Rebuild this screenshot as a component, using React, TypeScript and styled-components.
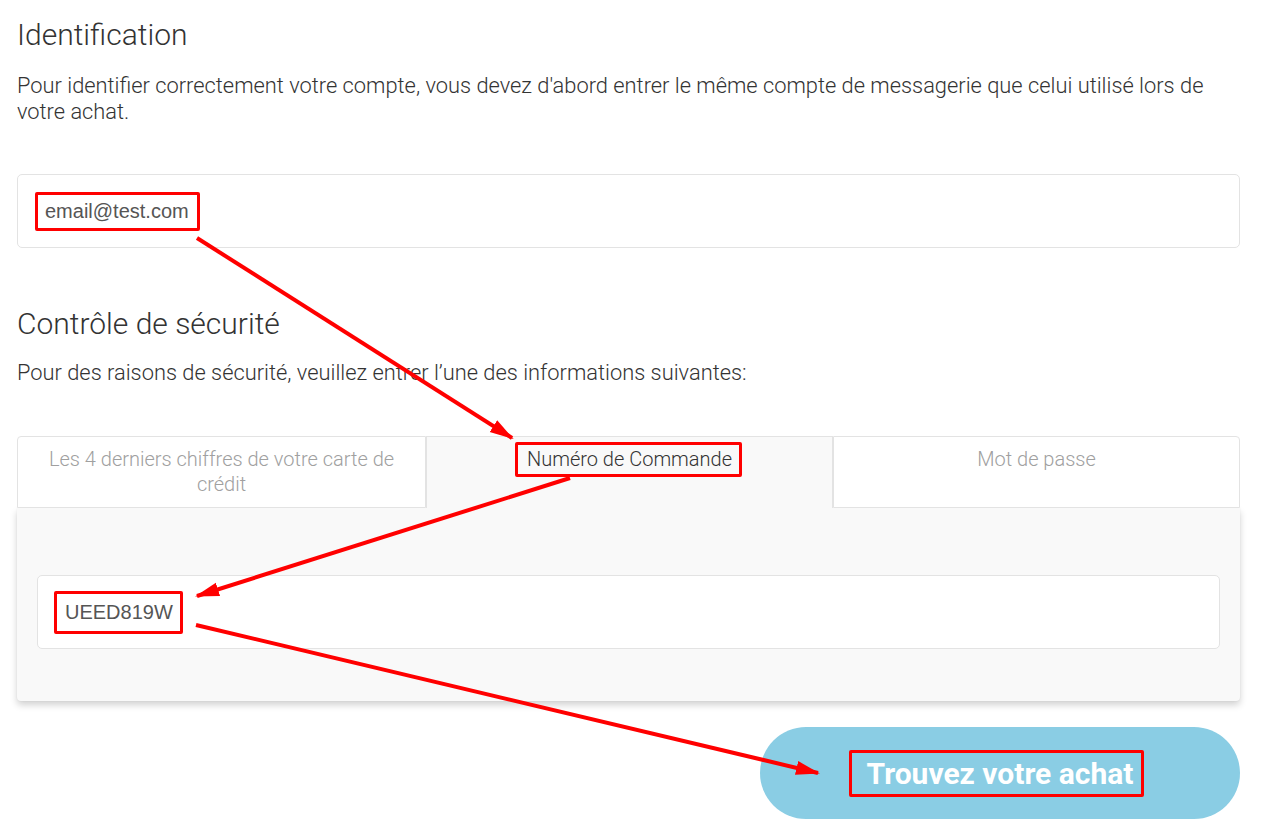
import React from "react";
import styled, { createGlobalStyle } from "styled-components";

const red = "#ff0000";
const line = "#e3e3e3";
const dark = "#333333";
const muted = "#a0a0a0";

const GlobalStyle = createGlobalStyle`
  body {
    margin: 0;
    background: #ffffff;
    font-family: Roboto, "Liberation Sans", sans-serif;
  }
`;

const Page = styled.div`
  position: relative;
  width: 1223px;
  padding: 17px 34px 16px 17px;
`;

const Title = styled.h2<{ $top: number }>`
  margin: ${(p) => p.$top}px 0 0;
  font-size: 30px;
  line-height: 36px;
  font-weight: 300;
  color: ${dark};
`;

const Text = styled.p<{ $top: number }>`
  margin: ${(p) => p.$top}px 0 0;
  font-size: 21.85px;
  line-height: 26px;
  font-weight: 300;
  color: ${dark};
`;

const Field = styled.div<{ $top: number }>`
  margin-top: ${(p) => p.$top}px;
  height: 72px;
  display: flex;
  align-items: center;
  padding: 0 27px;
  background: #ffffff;
  border: 1px solid ${line};
  border-radius: 5px;
  font-family: "Liberation Sans", Arial, sans-serif;
  font-size: 20px;
  color: #555555;
`;

const Marked = styled.span<{ $l: number; $r: number; $v: number }>`
  display: inline-block;
  border: 3px solid ${red};
  border-radius: 2px;
  padding: ${(p) => `${p.$v}px ${p.$r - 3}px ${p.$v}px ${p.$l - 3}px`};
  margin: ${(p) => `${-p.$v - 3}px ${-p.$r}px ${-p.$v - 3}px ${-p.$l}px`};
`;

const Tabs = styled.div`
  margin-top: 50px;
  display: grid;
  grid-template-columns: 409px 407px 407px;
  height: 72px;
`;

const Tab = styled.div<{ $active?: boolean; $side?: "left" | "right" }>`
  box-sizing: border-box;
  padding: 10px 24px 0;
  text-align: center;
  font-size: 20px;
  line-height: 25px;
  font-weight: 300;
  color: ${(p) => (p.$active ? dark : muted)};
  background: ${(p) => (p.$active ? "#f9f9f9" : "#ffffff")};
  border: 1px solid ${line};
  border-bottom: ${(p) => (p.$active ? "none" : `1px solid ${line}`)};
  border-radius: ${(p) =>
    p.$side === "left" ? "4px 0 0 0" : p.$side === "right" ? "0 4px 0 0" : "0"};
`;

const Panel = styled.div`
  height: 193px;
  box-sizing: border-box;
  padding: 67px 20px 0;
  background: #f9f9f9;
  box-shadow: 0 4px 7px rgba(0, 0, 0, 0.18), 0 0 2px rgba(0, 0, 0, 0.06);
  border-radius: 0 0 4px 4px;
`;

const Actions = styled.div`
  margin-top: 26px;
  display: flex;
  justify-content: flex-end;
`;

const Button = styled.button`
  width: 480px;
  height: 92px;
  border: none;
  border-radius: 46px;
  background: #8acde4;
  color: #ffffff;
  font-family: Roboto, "Liberation Sans", sans-serif;
  font-size: 30px;
  font-weight: 700;
  display: flex;
  align-items: center;
  justify-content: center;
  padding: 0;
`;

const Overlay = styled.svg`
  position: absolute;
  left: 0;
  top: 0;
  pointer-events: none;
`;

const arrows = [
  { x1: 197, y1: 238, x2: 512, y2: 438 },
  { x1: 570, y1: 478, x2: 197, y2: 596 },
  { x1: 196, y1: 625, x2: 818, y2: 773 },
];

const Annotations: React.FunctionComponent = () => (
  <Overlay width={1274} height={835}>
    <defs>
      <marker
        id="head"
        markerUnits="userSpaceOnUse"
        markerWidth="24"
        markerHeight="16"
        refX="22"
        refY="8"
        orient="auto"
      >
        <polygon points="0,1 24,8 0,15" fill={red} />
      </marker>
    </defs>
    {arrows.map((a, i) => (
      <line
        key={i}
        x1={a.x1}
        y1={a.y1}
        x2={a.x2}
        y2={a.y2}
        stroke={red}
        strokeWidth={4}
        markerEnd="url(#head)"
      />
    ))}
  </Overlay>
);

const App: React.FunctionComponent = () => {
  return (
    <Page>
      <GlobalStyle />
      <Title $top={0}>Identification</Title>
      <Text $top={20}>
        Pour identifier correctement votre compte, vous devez d'abord entrer le même compte de
        messagerie que celui utilisé lors de votre achat.
      </Text>
      <Field $top={49}>
        <Marked $l={10} $r={11} $v={5}>
          email@test.com
        </Marked>
      </Field>

      <Title $top={58}>Contrôle de sécurité</Title>
      <Text $top={18}>Pour des raisons de sécurité, veuillez entrer l’une des informations suivantes:</Text>

      <Tabs>
        <Tab $side="left">Les 4 derniers chiffres de votre carte de crédit</Tab>
        <Tab $active>
          <Marked $l={12} $r={10} $v={2}>
            Numéro de Commande
          </Marked>
        </Tab>
        <Tab $side="right">Mot de passe</Tab>
      </Tabs>
      <Panel>
        <Field $top={0}>
          <Marked $l={11} $r={10} $v={7}>
            UEED819W
          </Marked>
        </Field>
      </Panel>

      <Actions>
        <Button>
          <Marked $l={18} $r={11} $v={3}>
            Trouvez votre achat
          </Marked>
        </Button>
      </Actions>
      <Annotations />
    </Page>
  );
};

export default App;
